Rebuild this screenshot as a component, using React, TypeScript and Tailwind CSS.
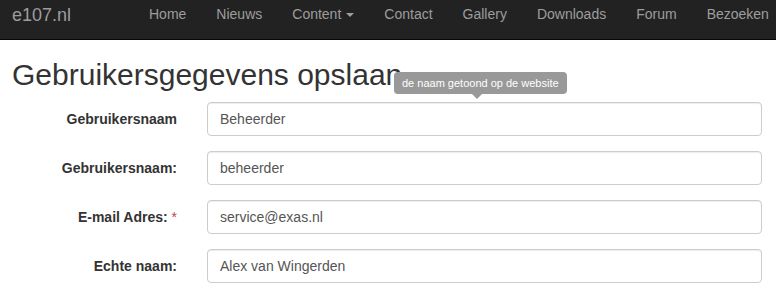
const navItems = ["Home", "Nieuws", "Content", "Contact", "Gallery", "Downloads", "Forum", "Bezoeken"];

const fields = [
  { label: "Gebruikersnaam", value: "Beheerder" },
  { label: "Gebruikersnaam:", value: "beheerder" },
  { label: "E-mail Adres:", value: "service@exas.nl", required: true },
  { label: "Echte naam:", value: "Alex van Wingerden" },
];

export default function App() {
  return (
    <div
      className="relative h-[296px] w-[776px] overflow-hidden bg-white text-[#333]"
      style={{ fontFamily: '"Liberation Sans", Arial, sans-serif' }}
    >
      {/* Navbar */}
      <nav className="flex h-[40px] border-b border-[#080808] bg-[#222] whitespace-nowrap">
        <div className="w-[134px] shrink-0 pl-[12px] pt-[5px] text-[18px] leading-[20px] text-[#9d9d9d]">
          e107.nl
        </div>
        <ul className="flex">
          {navItems.map((item) => (
            <li
              key={item}
              className="flex items-start px-[15px] pt-[4px] text-[14px] leading-[20px] text-[#9d9d9d]"
            >
              {item}
              {item === "Content" && (
                <span className="ml-[5px] mt-[9px] inline-block h-0 w-0 border-x-[4px] border-t-[4px] border-x-transparent border-t-[#9d9d9d]" />
              )}
            </li>
          ))}
        </ul>
      </nav>

      {/* Heading */}
      <h1 className="mt-[18px] pl-[12px] text-[30px] leading-[33px] font-normal text-[#333]">
        Gebruikersgegevens opslaan
      </h1>

      {/* Form */}
      <form className="mt-[11px] flex flex-col gap-[15px] pr-[14px]">
        {fields.map((f) => (
          <div key={f.label} className="grid grid-cols-[177px_1fr] gap-[30px]">
            <label className="pt-[7px] text-right text-[14px] leading-[20px] font-bold text-[#333]">
              {f.label}
              {f.required && <span className="font-normal text-[#b94a48]"> *</span>}
            </label>
            <input
              readOnly
              value={f.value}
              className="h-[34px] rounded-[4px] border border-[#ccc] bg-white px-[12px] text-[14px] text-[#555] shadow-[inset_0_1px_1px_rgba(0,0,0,0.075)] outline-none"
            />
          </div>
        ))}
      </form>

      {/* Tooltip */}
      <div className="absolute left-[394px] top-[72px]">
        <div className="rounded-[4px] bg-[#999] px-[8px] py-[3px] text-[11px] leading-[16px] text-white whitespace-nowrap">
          de naam getoond op de website
        </div>
        <div className="ml-[78px] h-0 w-0 border-x-[5px] border-t-[5px] border-x-transparent border-t-[#999]" />
      </div>
    </div>
  );
}
